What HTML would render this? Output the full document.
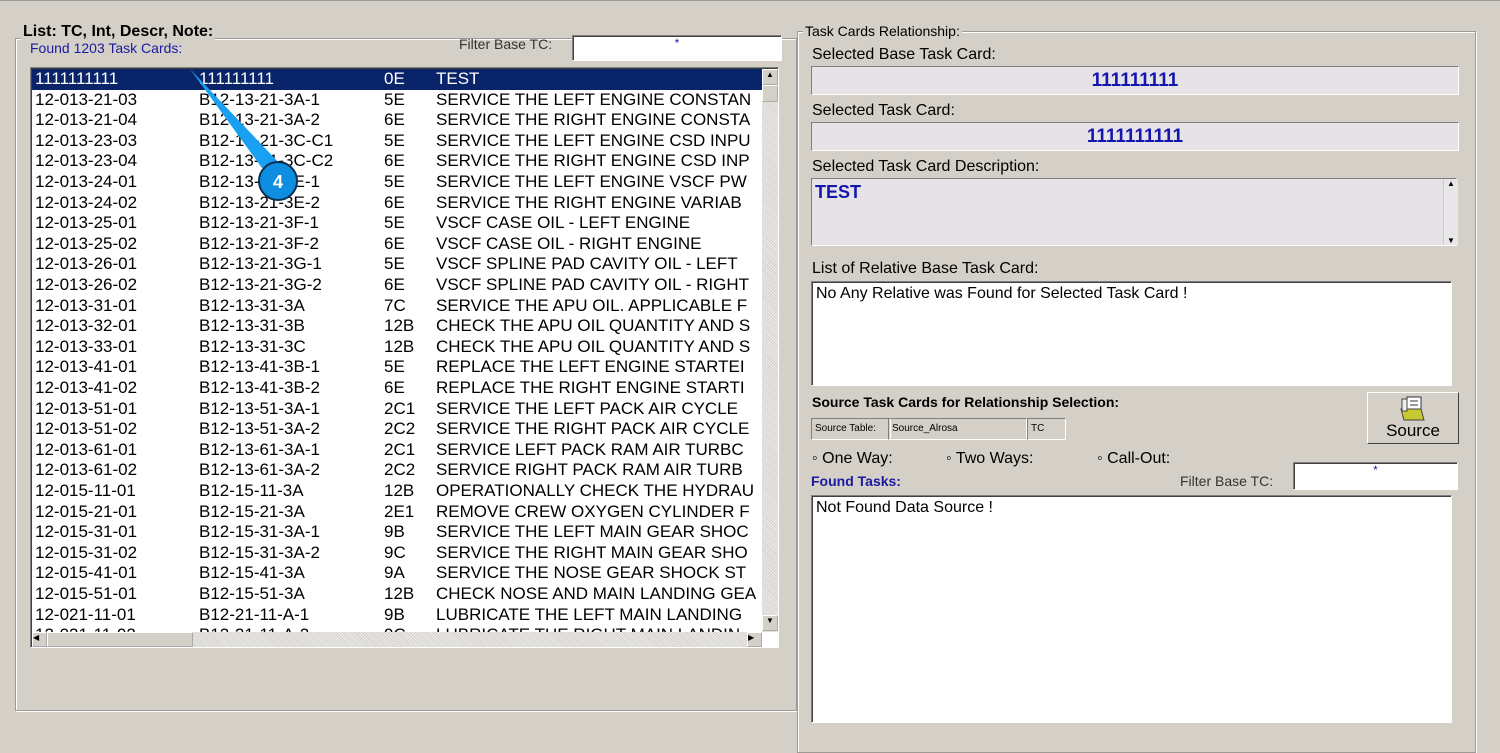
<!DOCTYPE html><html><head><style>
body{margin:0;width:1500px;height:743px;background:#d4d0c8;font-family:"Liberation Sans",sans-serif;position:relative;overflow:hidden}
.a{position:absolute}
.gb{position:absolute;border:1px solid #9c9a94;box-shadow:1px 1px 0 #fff inset,1px 1px 0 #fff}
.gt{position:absolute;background:#d4d0c8;padding:0 2px;font-weight:bold;color:#000}
.sunk{position:absolute;border:1px solid;border-color:#808080 #fff #fff #808080;box-shadow:inset 1px 1px 0 #404040}
.row{position:absolute;left:0;height:20.6px;width:740px;font-size:17px;line-height:20.6px;white-space:nowrap;letter-spacing:0}
.row span{position:absolute}
.lbl{position:absolute;font-size:16px;color:#000}
.ro{position:absolute;background:#e6e3e6;border:1px solid;border-color:#808080 #fff #fff #808080;color:#1515b0;font-weight:bold;font-size:19px;text-align:center}
</style></head><body>
<div class="a" style="left:0;top:0;width:1500px;height:1px;background:#9c9a94"></div>
<div class="gb" style="left:15px;top:38px;width:780px;height:671px"></div>
<div class="gt" style="left:21px;top:23px;font-size:16px">List: TC, Int, Descr, Note:</div>
<div class="a" style="left:30px;top:40px;color:#1a1aa0;font-size:14px">Found 1203 Task Cards:</div>
<div class="a" style="left:459px;top:36px;font-size:14px;color:#333">Filter Base TC:</div>
<div class="sunk" style="left:572px;top:35px;width:208px;height:24px;background:#fff;text-align:center;color:#1a1aa0;font-size:12px">*</div>
<div class="sunk" style="left:30px;top:67px;width:747px;height:579px;background:#fff;overflow:hidden">
<div style="position:absolute;left:1px;top:1px;width:730px;height:564px;overflow:hidden">
<div id="rows"></div></div>
<div class="a" style="left:731px;top:1px;width:16px;height:563px;background:repeating-linear-gradient(45deg,#eee 0 1px,#d4d0c8 1px 2px)"></div>
<div class="a" style="left:731px;top:1px;width:14px;height:14px;background:#d4d0c8;border:1px outset #fff;font-size:8px;text-align:center">▲</div>
<div class="a" style="left:731px;top:17px;width:14px;height:15px;background:#d4d0c8;border:1px outset #fff"></div>
<div class="a" style="left:731px;top:547px;width:14px;height:14px;background:#d4d0c8;border:1px outset #fff;font-size:8px;text-align:center">▼</div>
<div class="a" style="left:1px;top:564px;width:730px;height:15px;background:repeating-linear-gradient(45deg,#eee 0 1px,#d4d0c8 1px 2px)"></div>
<div class="a" style="left:1px;top:564px;width:13px;height:13px;background:#d4d0c8;border:1px outset #fff;font-size:8px">◀</div>
<div class="a" style="left:16px;top:564px;width:144px;height:13px;background:#d4d0c8;border:1px outset #fff"></div>
<div class="a" style="left:716px;top:564px;width:13px;height:13px;background:#d4d0c8;border:1px outset #fff;font-size:8px">▶</div>
</div>
<svg class="a" style="left:0;top:0" width="800" height="220"><polygon points="190,69 262,168 282,166" fill="#1aa0f0"/><circle cx="278" cy="181" r="19" fill="#0e8ee0" stroke="#0a3050" stroke-width="2"/><text x="278" y="188" fill="#fff" font-weight="bold" font-size="18" text-anchor="middle" font-family="Liberation Sans">4</text></svg>

<div class="gb" style="left:797px;top:31px;width:677px;height:720px"></div>
<div class="gt" style="left:803px;top:23px;font-size:14px;font-weight:normal">Task Cards Relationship:</div>
<div class="lbl" style="left:812px;top:46px">Selected Base Task Card:</div>
<div class="ro" style="left:811px;top:66px;width:646px;height:27px;line-height:27px">111111111</div>
<div class="lbl" style="left:812px;top:102px">Selected Task Card:</div>
<div class="ro" style="left:811px;top:122px;width:646px;height:27px;line-height:27px">1111111111</div>
<div class="lbl" style="left:812px;top:158px">Selected Task Card Description:</div>
<div class="ro" style="left:811px;top:178px;width:646px;height:68px;text-align:left;font-size:18px;padding:0 0 0 3px;box-sizing:border-box;line-height:26px">TEST</div>
<div class="a" style="left:1443px;top:179px;width:14px;height:66px;background:#e8e6e8;border-left:1px solid #ccc;font-size:8px;text-align:center">▲<div style="position:absolute;bottom:0;width:14px">▼</div></div>
<div class="lbl" style="left:812px;top:260px">List of Relative Base Task Card:</div>
<div class="sunk" style="left:811px;top:281px;width:641px;height:105px;background:#fff;font-size:16px;padding:3px 4px;box-sizing:border-box">No Any Relative was Found for Selected Task Card !</div>
<div class="a" style="left:812px;top:394px;font-size:14px;font-weight:bold">Source Task Cards for Relationship Selection:</div>
<div class="sunk" style="left:811px;top:418px;width:75px;height:20px;font-size:10px;line-height:20px;box-shadow:none;padding-left:3px">Source Table:</div>
<div class="sunk" style="left:888px;top:418px;width:134px;height:20px;font-size:10px;line-height:20px;box-shadow:none;padding-left:3px">Source_Alrosa</div>
<div class="sunk" style="left:1027px;top:418px;width:34px;height:20px;font-size:10px;line-height:20px;box-shadow:none;padding-left:3px">TC</div>
<div class="a" style="left:1367px;top:392px;width:90px;height:50px;border:1px solid;border-color:#fff #404040 #404040 #fff;text-align:center;font-size:17px">
<svg width="30" height="26" style="display:block;margin:2px auto 0"><rect x="9" y="2" width="14" height="16" fill="#fff" stroke="#333"/><path d="M12 6h8M12 10h8M12 14h8" stroke="#333"/><polygon points="3,14 23,14 26,25 6,25" fill="#c8c830" stroke="#444"/><rect x="4" y="4" width="5" height="12" fill="#eee" stroke="#444"/></svg>Source</div>
<div class="a" style="left:812px;top:450px;font-size:16px">◦ One Way:</div>
<div class="a" style="left:946px;top:450px;font-size:16px">◦ Two Ways:</div>
<div class="a" style="left:1097px;top:450px;font-size:16px">◦ Call-Out:</div>
<div class="a" style="left:811px;top:473px;font-size:14px;font-weight:bold;color:#1a1aa0">Found Tasks:</div>
<div class="a" style="left:1180px;top:473px;font-size:14px;color:#333">Filter Base TC:</div>
<div class="sunk" style="left:1293px;top:462px;width:163px;height:26px;background:#fff;text-align:center;color:#1a1aa0;font-size:12px">*</div>
<div class="sunk" style="left:811px;top:495px;width:641px;height:228px;background:#fff;font-size:16px;padding:3px 4px;box-sizing:border-box">Not Found Data Source !</div>
<script>
var d=[["1111111111","111111111","0E","TEST"],["12-013-21-03","B12-13-21-3A-1","5E","SERVICE THE LEFT ENGINE CONSTAN"],["12-013-21-04","B12-13-21-3A-2","6E","SERVICE THE RIGHT ENGINE CONSTA"],["12-013-23-03","B12-13-21-3C-C1","5E","SERVICE THE LEFT ENGINE CSD INPU"],["12-013-23-04","B12-13-21-3C-C2","6E","SERVICE THE RIGHT ENGINE CSD INP"],["12-013-24-01","B12-13-21-3E-1","5E","SERVICE THE LEFT ENGINE VSCF PW"],["12-013-24-02","B12-13-21-3E-2","6E","SERVICE THE RIGHT ENGINE VARIAB"],["12-013-25-01","B12-13-21-3F-1","5E","VSCF CASE OIL - LEFT ENGINE"],["12-013-25-02","B12-13-21-3F-2","6E","VSCF CASE OIL - RIGHT ENGINE"],["12-013-26-01","B12-13-21-3G-1","5E","VSCF SPLINE PAD CAVITY OIL - LEFT"],["12-013-26-02","B12-13-21-3G-2","6E","VSCF SPLINE PAD CAVITY OIL - RIGHT"],["12-013-31-01","B12-13-31-3A","7C","SERVICE THE APU OIL. APPLICABLE F"],["12-013-32-01","B12-13-31-3B","12B","CHECK THE APU OIL QUANTITY AND S"],["12-013-33-01","B12-13-31-3C","12B","CHECK THE APU OIL QUANTITY AND S"],["12-013-41-01","B12-13-41-3B-1","5E","REPLACE THE LEFT ENGINE STARTEI"],["12-013-41-02","B12-13-41-3B-2","6E","REPLACE THE RIGHT ENGINE STARTI"],["12-013-51-01","B12-13-51-3A-1","2C1","SERVICE THE LEFT PACK AIR CYCLE"],["12-013-51-02","B12-13-51-3A-2","2C2","SERVICE THE RIGHT PACK AIR CYCLE"],["12-013-61-01","B12-13-61-3A-1","2C1","SERVICE LEFT PACK RAM AIR TURBC"],["12-013-61-02","B12-13-61-3A-2","2C2","SERVICE RIGHT PACK RAM AIR TURB"],["12-015-11-01","B12-15-11-3A","12B","OPERATIONALLY CHECK THE HYDRAU"],["12-015-21-01","B12-15-21-3A","2E1","REMOVE CREW OXYGEN CYLINDER F"],["12-015-31-01","B12-15-31-3A-1","9B","SERVICE THE LEFT MAIN GEAR SHOC"],["12-015-31-02","B12-15-31-3A-2","9C","SERVICE THE RIGHT MAIN GEAR SHO"],["12-015-41-01","B12-15-41-3A","9A","SERVICE THE NOSE GEAR SHOCK ST"],["12-015-51-01","B12-15-51-3A","12B","CHECK NOSE AND MAIN LANDING GEA"],["12-021-11-01","B12-21-11-A-1","9B","LUBRICATE THE LEFT MAIN LANDING"],["12-021-11-02","B12-21-11-A-2","9C","LUBRICATE THE RIGHT MAIN LANDIN"]];
var h="";d.forEach(function(r,i){var s=i==0?"background:#0a246a;color:#fff;":"";h+='<div class="row" style="top:'+(i*20.6)+'px;'+s+'"><span style="left:3px">'+r[0]+'</span><span style="left:167px">'+r[1]+'</span><span style="left:352px">'+r[2]+'</span><span style="left:404px">'+r[3]+'</span></div>'});document.getElementById("rows").innerHTML=h;
</script>
</body></html>
